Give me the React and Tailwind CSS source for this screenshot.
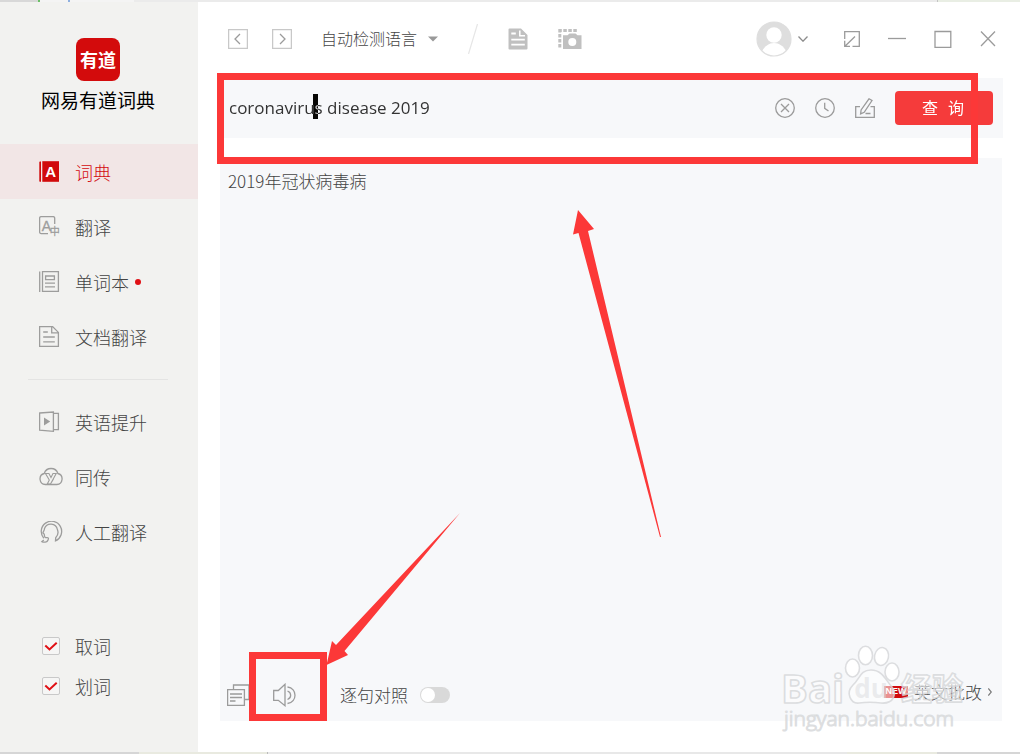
import React from "react";

const LIGHT = "font-['Noto_Sans_CJK_SC',sans-serif] font-light";

function Glyph({ children }) {
  return (
    <svg
      className="h-[22px] w-6 shrink-0"
      viewBox="0 0 24 22"
      fill="none"
      stroke="#9d9d9c"
      strokeWidth="1.3"
      aria-hidden="true"
    >
      {children}
    </svg>
  );
}

const glyphs = {
  dict: (
    <Glyph>
      <path d="M2 .5H1A.7.7 0 0 0 .3 1.200V20a.7.7 0 0 0 .7.8h1z" fill="#d10a0c" stroke="none" />
      <path d="M3.300.2H20v20.600H3.300z" fill="#d10a0c" stroke="none" />
      <text x="11.700" y="16" textAnchor="middle" fill="#fff" stroke="none" fontSize="15" fontWeight="700" fontFamily="Liberation Sans, sans-serif">A</text>
    </Glyph>
  ),
  translate: (
    <Glyph>
      <path d="M15.700 8V2.200A1.600 1.600 0 0 0 14.100.6H2.200A1.600 1.600 0 0 0 .6 2.200v13.800a1.600 1.600 0 0 0 1.600 1.600H9" />
      <text x="7.500" y="14.800" textAnchor="middle" fill="#9d9d9c" stroke="#9d9d9c" strokeWidth=".3" fontSize="14" fontFamily="Liberation Sans, sans-serif">A</text>
      <text x="15.700" y="19.300" textAnchor="middle" fill="#9d9d9c" stroke="#9d9d9c" strokeWidth=".4" fontSize="10" fontFamily="Noto Sans CJK SC, sans-serif">中</text>
    </Glyph>
  ),
  words: (
    <Glyph>
      <path d="M.7.5v20.500M3.500.6h15.900v19.800H3.500zM6.600 5h8.800v3.600H6.600zM6 12.200h10M6 15.800h10" />
    </Glyph>
  ),
  doc: (
    <Glyph>
      <path d="M.6.6h13l5.800 5.800v14H.6zM12.700.8v6h6.500M4.200 6h4.600M4.200 11h11.600M4.200 15.800h11.600" />
    </Glyph>
  ),
  lesson: (
    <Glyph>
      <path d="m.6 2 13.800-1v19.400L.6 19.200zM14.400 2.300h5v16.400h-5" />
      <path d="M5 6.500v8l6.200-4z" fill="#9d9d9c" stroke="none" />
    </Glyph>
  ),
  cloud: (
    <Glyph>
      <path d="M6.300 18.500A5.600 5.600 0 0 1 5.200 7.500 7.200 7.200 0 0 1 18.900 7.500 5.600 5.600 0 0 1 17.800 18.500z" />
      <path d="M6.500 7.500h3.400l2.100 4 2-4h3.200L11.500 18H8.300l2-4zM11.500 18l3-5" strokeWidth="1.100" />
    </Glyph>
  ),
  person: (
    <Glyph>
      <path d="M4.800 17.200A10.200 10.200 0 1 1 16.500 19.800l.2-3A7.800 7.800 0 0 0 18.400 8.500 6.700 6.700 0 0 0 5.500 7.500c0 2-1.500 3.300-1.500 4.300 0 .8 1 .6 1.200 1.400.2 1 .1 2.600 1 3.200 1 .6 2.500-.2 3 .5.8 1-.8 3.700-2 4-1.500.4-3.500.2-4.300-.3L4.800 19" />
    </Glyph>
  ),
};

const primary = [
  { icon: "dict", label: "词典", active: true },
  { icon: "translate", label: "翻译" },
  { icon: "words", label: "单词本", dot: true },
  { icon: "doc", label: "文档翻译" },
];
const secondary = [
  { icon: "lesson", label: "英语提升" },
  { icon: "cloud", label: "同传" },
  { icon: "person", label: "人工翻译" },
];

function NavItem({ icon, label, active, dot }) {
  return (
    <li>
      <a
        href="#"
        aria-current={active ? "page" : undefined}
        className={
          active
            ? "flex h-[55px] items-center gap-3 bg-[#f2e6e6] pl-[39px] text-lg text-[#d40a10]"
            : "flex h-[55px] items-center gap-3 pl-[39px] text-lg text-[#444]"
        }
      >
        {glyphs[icon]}
        <span className="flex items-center gap-1.5">
          {label}
          {dot && <i className="size-1.5 rounded-full bg-[#e01015]" />}
        </span>
      </a>
    </li>
  );
}

function Check({ label }) {
  return (
    <label className="flex h-10 items-center gap-[15px] pl-[42px] text-lg text-[#444]">
      <span className="grid">
        <input
          type="checkbox"
          defaultChecked
          className="peer col-start-1 row-start-1 size-[18px] appearance-none rounded-xs border border-[#c9c9c9] bg-[#f6f6f5]"
        />
        <svg
          className="pointer-events-none invisible col-start-1 row-start-1 size-[18px] peer-checked:visible"
          viewBox="0 0 18 18"
          fill="none"
          stroke="#e01015"
          strokeWidth="2"
          aria-hidden="true"
        >
          <path d="m3.300 8.500 4.200 4 7.200-6.700" />
        </svg>
      </span>
      {label}
    </label>
  );
}

function IconButton({ label, className, children, box = "0 0 20 20" }) {
  return (
    <button type="button" aria-label={label} className="shrink-0">
      <svg className={className} viewBox={box} fill="none" stroke="#9b9b9b" strokeWidth="1.300" aria-hidden="true">
        {children}
      </svg>
    </button>
  );
}

function Sidebar() {
  return (
    <aside className={`flex w-[198px] shrink-0 flex-col bg-[#f2f2f0] pb-[46px] ${LIGHT}`}>
      <div className="flex h-[142px] flex-col items-center pt-9 pr-0.5">
        <div className="flex h-[43px] w-11 items-center justify-center rounded-lg bg-[#d30b0c] pb-0.5 text-lg font-bold text-white">
          有道
        </div>
        <h1 className="mt-1.5 text-[19px] leading-[26px] font-normal text-black">网易有道词典</h1>
      </div>
      <nav>
        <ul>{primary.map((n) => <NavItem key={n.label} {...n} />)}</ul>
        <hr className="mr-[30px] ml-7 mt-[15px] mb-3.5 border-[#e4e4e3]" />
        <ul>{secondary.map((n) => <NavItem key={n.label} {...n} />)}</ul>
      </nav>
      <div className="mt-auto">
        <Check label="取词" />
        <Check label="划词" />
      </div>
    </aside>
  );
}

function TopBar() {
  return (
    <header className="flex h-[76px] items-center pr-6 pb-0.5 pl-[30px]">
      <div className="flex gap-6">
        <IconButton label="后退" className="size-5">
          <path d="M.6.6h18.800v18.800H.6z" stroke="#c8c8c8" />
          <path d="m12 5-5 5 5 5" />
        </IconButton>
        <IconButton label="前进" className="size-5">
          <path d="M.6.6h18.800v18.800H.6z" stroke="#c8c8c8" />
          <path d="m8 5 5 5-5 5" />
        </IconButton>
      </div>
      <label className="ml-[29px] flex items-center gap-2.5">
        <select
          aria-label="语言"
          className={`appearance-none pb-0.5 text-base text-[#444] ${LIGHT}`}
        >
          <option>自动检测语言</option>
        </select>
        <svg className="h-1.5 w-2.5" viewBox="0 0 10 6" aria-hidden="true">
          <path d="M0 .5h10L5 5.500z" fill="#999" />
        </svg>
      </label>
      <svg className="ml-[30px] h-[30px] w-2.5" viewBox="0 0 10 30" aria-hidden="true">
        <path d="M9.500 0 .5 30" stroke="#e6e6e6" strokeWidth="1.200" />
      </svg>
      <div className="ml-[30px] flex items-center gap-[30px]">
        <IconButton label="文档" className="h-[22px] w-5" box="0 0 20 22">
          <path d="M1.500.5H13L19.500 7v13.500a1 1 0 0 1-1 1h-17a1 1 0 0 1-1-1v-19a1 1 0 0 1 1-1z" fill="#c0c0c0" stroke="none" />
          <path d="M3.300 5.500h4.500M3.300 11.700h13.500M3.300 16.700h13.500" stroke="#fff" strokeWidth="1.800" />
          <path d="M11.800 2.500v5.300h5.200" stroke="#fff" strokeWidth="1.500" />
        </IconButton>
        <IconButton label="截图" className="h-[22px] w-6" box="0 0 24 22">
          <path d="M.3 2.500H20M1.800 1v19" stroke="#c0c0c0" strokeWidth="3" strokeDasharray="3.500 1.500" />
          <path d="M5 7.200h4.500L11.500 5.500h6l2 1.700h4V21H5z" fill="#c0c0c0" stroke="none" />
          <circle cx="14.300" cy="14" r="4" fill="#fff" stroke="none" />
        </IconButton>
      </div>
      <div className="ml-auto flex items-center">
        <button type="button" aria-label="账户" className="flex items-center gap-1.5">
          <svg className="size-9" viewBox="0 0 36 36" aria-hidden="true">
            <circle cx="18" cy="18" r="17" fill="#dedede" />
            <circle cx="18" cy="14" r="7.700" fill="#fff" />
            <path d="M6 30.200C9 25 13 22 18 22s9.500 3 12 8.200A17 17 0 0 1 6 30.200z" fill="#fff" />
            <circle cx="18" cy="18" r="17" fill="none" stroke="#dedede" strokeWidth="1.200" />
          </svg>
          <svg className="h-1.5 w-2.5" viewBox="0 0 10 6" fill="none" stroke="#8c8c8c" strokeWidth="1.300" aria-hidden="true">
            <path d="m.5.5 4.500 4.700L9.500.5" />
          </svg>
        </button>
        <div className="ml-9 flex items-center gap-7">
          <IconButton label="迷你窗口" className="size-4" box="0 0 16 16">
            <path d="M.7 8V.7h14.600v14.600H8.500M11 5.500 1.200 15M.7 9.800v5.500H6" />
          </IconButton>
          <IconButton label="最小化" className="size-[18px]" box="0 0 18 18">
            <path d="M0 8.500h18" />
          </IconButton>
          <IconButton label="最大化" className="size-[18px]" box="0 0 18 18">
            <path d="M1 1.500h15.800v15.800H1z" />
          </IconButton>
          <IconButton label="关闭" className="size-4" box="0 0 16 16">
            <path d="m1 .5 14 14.500M15 .5 1 15" />
          </IconButton>
        </div>
      </div>
    </header>
  );
}

function SearchBar() {
  return (
    <form className="relative z-10 mr-[17px] ml-[22px] flex h-[60px] items-center bg-[#f7f8fa] pr-2.5 pl-[9px]">
      <div className="relative min-w-0 flex-1">
        <input
          type="text"
          aria-label="查询内容"
          defaultValue="coronavirus disease 2019"
          className="h-8 w-full bg-transparent pb-0.5 font-['Open_Sans',sans-serif] text-[17px] text-[#333] outline-none"
        />
        <i className="pointer-events-none absolute top-0.5 left-21 h-[25px] w-[5px] bg-white mix-blend-difference" />
      </div>
      <div className="flex shrink-0 items-center gap-5">
        <IconButton label="清除" className="size-5">
          <path d="M10 .7a9.300 9.300 0 1 0 0 18.600A9.300 9.300 0 0 0 10 .7zM6 6l8 8M14 6l-8 8" />
        </IconButton>
        <IconButton label="历史" className="size-5">
          <path d="M10 .7a9.300 9.300 0 1 0 0 18.600A9.300 9.300 0 0 0 10 .7zM9.700 4.800v5.500l3.800 2.700" />
        </IconButton>
        <IconButton label="手写" className="size-5">
          <path d="M5 8.600H.7v10.700h18.600V8.600h-3.800M10.500 15.500h5" />
          <path d="m14 .8 3 1.700-7.800 11.800-3.600 1.600.5-3.900z" />
        </IconButton>
        <button
          type="submit"
          className="flex h-[34px] w-[98px] items-center justify-center gap-2.5 rounded-sm bg-[#f53b3b] pr-0.5 pb-0.5 font-['Noto_Sans_CJK_SC',sans-serif] text-base text-white"
        >
          <span>查</span>
          <span>询</span>
        </button>
      </div>
      <div className="pointer-events-none absolute -top-[5px] right-[25px] -left-[3px] h-[91px] border-7 border-[#fc3838]" />
    </form>
  );
}

function Watermark() {
  return (
    <svg
      className="pointer-events-none absolute right-8 -bottom-4 h-24 w-[190px]"
      viewBox="0 0 190 96"
      fill="#fff"
      fillOpacity=".55"
      stroke="#d4d6d8"
      strokeOpacity=".8"
      strokeWidth="1.600"
      strokeLinejoin="round"
      fontFamily="Open Sans, Noto Sans CJK SC, sans-serif"
      aria-hidden="true"
    >
      <text x="1" y="62" fontSize="40" fontWeight="700">Bai</text>
      <ellipse cx="72.500" cy="27" rx="7" ry="9" fillOpacity=".9" />
      <ellipse cx="85.500" cy="14.500" rx="7" ry="9.300" fillOpacity=".9" />
      <ellipse cx="101.500" cy="15.500" rx="7" ry="9" fillOpacity=".9" transform="rotate(12 101.500 15.500)" />
      <ellipse cx="112" cy="31" rx="7" ry="9" fillOpacity=".9" />
      <path d="M91 29c-11 0-11 9-18 15-8 8-2 19 6 18 8-1 14-1 22 0 13 1 16-9 11-16-6-6-9-17-21-17z" />
      <text x="91" y="57" fontSize="26" textAnchor="middle" fontWeight="700" fill="#dcdddf" stroke="none">du</text>
      <text x="121" y="59" fontSize="31" fontWeight="700">经验</text>
      <text x="4" y="85" fontSize="21" strokeWidth="1.200">jingyan.baidu.com</text>
    </svg>
  );
}

function Result() {
  return (
    <section className={`relative mr-[18px] mt-5 mb-[31px] ml-[22px] flex flex-1 flex-col bg-[#f7f8fa] text-[17px] text-[#444] ${LIGHT}`}>
      <p className="px-2 pt-3 leading-[22px]">2019年冠状病毒病</p>
      <div className="mt-auto flex h-[52px] items-center pr-2.5 pl-[7px]">
        <IconButton label="复制" className="h-[22px] w-6" box="0 0 24 22">
          <path d="M.6 5.600h16.800v15.800H.6zM3 10h12M3 13.500h12M3 17h5.500" />
          <path d="M6.500 5V1H22v14.500h-4" />
        </IconButton>
        <span className="relative ml-[22px] flex">
          <IconButton label="朗读" className="size-6" box="0 0 24 24">
            <path d="M.7 7.500h4.600L12 1.300v21.400l-6.700-5.400H.7z" />
            <path d="M14.500 8c4.200 1.500 4.200 7 0 8.500M14.500 4c10 1.500 10 15 0 16.500" />
          </IconButton>
          <i className="pointer-events-none absolute -top-[31px] -left-6 h-[69px] w-[78px] border-7 border-[#fc3838]" />
        </span>
        <label className="ml-[43px] flex items-center gap-3">
          逐句对照
          <input
            type="checkbox"
            role="switch"
            className="h-4 w-[30px] appearance-none rounded-full bg-[#d9d9d9] p-px before:block before:size-3.5 before:rounded-full before:bg-white checked:bg-[#f53b3b] checked:before:ml-3.5"
          />
        </label>
        <a href="#" className="ml-auto flex items-center gap-1.5 pb-1.5">
          <span className="flex h-3 w-6 items-center justify-center bg-[#d10a0c] font-['Liberation_Sans',sans-serif] text-[9px] font-bold text-white">
            NEW
          </span>
          英文批改
          <svg className="h-2 w-1" viewBox="0 0 4 8" fill="none" stroke="#777" strokeWidth="1.200" aria-hidden="true">
            <path d="m.3.5 3 3.500-3 3.500" />
          </svg>
        </a>
      </div>
      <svg className="pointer-events-none absolute top-[52px] left-[352px] h-[328px] w-[90px]" viewBox="572 210 90 328" fill="#fc3838" aria-hidden="true">
        <path d="m578 210 16 19-6 2 73 306h-1L578.500 233l-5.500 1.500z" />
      </svg>
      <svg className="pointer-events-none absolute bottom-[55px] left-[106px] h-[154px] w-[136px]" viewBox="326 512 136 154" fill="#fc3838" aria-hidden="true">
        <path d="m326.500 665 5.500-24 4 4L460 513 344.500 651l3.500 4z" />
      </svg>
      <Watermark />
    </section>
  );
}

export default function App() {
  return (
    <div className="flex min-h-screen flex-col bg-white">
      <div className="flex h-0.5 bg-[#ebebeb]">
        <i className="w-[38px] bg-[#d8d8d8]" />
        <i className="w-0.5 bg-[#6cc067]" />
        <i className="w-7 bg-[#f4f4f4]" />
        <i className="w-0.5 bg-[#8fb0e0]" />
        <i className="w-16 bg-[#f4f4f4]" />
        <i className="ml-auto w-px bg-[#c4c4c4]" />
        <i className="w-[82px] bg-[#e9eee4]" />
      </div>
      <div className="flex flex-1">
        <Sidebar />
        <main className="flex min-w-0 flex-1 flex-col">
          <TopBar />
          <SearchBar />
          <Result />
        </main>
      </div>
      <div className="flex h-0.5 bg-[#e8e8e8]">
        <i className="w-[139px] bg-[#d6d6d6]" />
        <i className="w-32 bg-[#e9eae0]" />
        <i className="w-px bg-[#bbb]" />
        <i className="ml-auto w-[90px] bg-[#e9eae0]" />
        <i className="w-[83px] bg-[#d6d6d6]" />
      </div>
    </div>
  );
}
